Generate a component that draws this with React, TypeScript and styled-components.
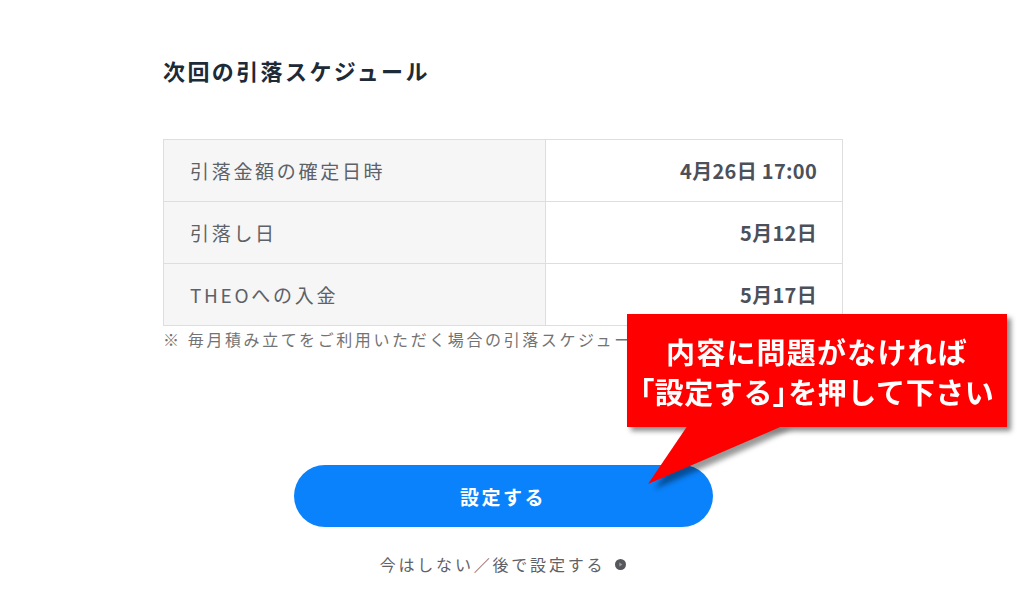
import React from "react";
import styled, { createGlobalStyle } from "styled-components";

const GlobalStyle = createGlobalStyle`
  html, body {
    margin: 0;
    padding: 0;
    background: #ffffff;
  }
  body {
    font-family: "Noto Sans CJK JP", "Noto Sans", sans-serif;
    width: 1024px;
    height: 594px;
    overflow: hidden;
  }
`;

const Page = styled.div`
  position: relative;
  width: 1024px;
  height: 594px;
  padding-top: 53px;
  box-sizing: border-box;
`;

const Column = styled.div`
  width: 680px;
  margin-left: 163px;
  display: flex;
  flex-direction: column;
`;

const Title = styled.h2`
  margin: 0;
  font-size: 22px;
  line-height: 34px;
  font-weight: 700;
  letter-spacing: 2.4px;
  color: #1d2a38;
`;

const Table = styled.table`
  margin-top: 52px;
  width: 680px;
  border-collapse: collapse;
  border: 1px solid #dedede;
`;

const Row = styled.tr`
  height: 62px;
`;

const LabelCell = styled.td`
  width: 382px;
  box-sizing: border-box;
  background: #f6f6f6;
  border: 1px solid #dedede;
  padding: 0 0 0 26px;
  font-size: 19px;
  letter-spacing: 2.7px;
  color: #5d6168;
  font-weight: 400;
`;

const ValueCell = styled.td`
  background: #ffffff;
  border: 1px solid #dedede;
  padding: 0 25px 0 0;
  text-align: right;
  font-size: 20px;
  font-weight: 700;
  color: #4b505a;
  letter-spacing: 0.3px;
`;

const Note = styled.p`
  margin: 1px 0 0;
  font-size: 16px;
  line-height: 24px;
  letter-spacing: 2.6px;
  color: #737373;
  white-space: nowrap;
`;

const PrimaryButton = styled.button`
  margin: 114px auto 0;
  width: 419px;
  height: 62px;
  border: none;
  border-radius: 31px;
  background: #0a82fb;
  color: #ffffff;
  font-family: "Noto Sans CJK JP", "Noto Sans", sans-serif;
  font-size: 19px;
  font-weight: 700;
  letter-spacing: 2.5px;
  cursor: pointer;
`;

const LaterLink = styled.a`
  margin: 25px auto 0;
  display: flex;
  align-items: center;
  gap: 10px;
  font-size: 16px;
  line-height: 24px;
  letter-spacing: 2.8px;
  color: #5f6166;
  text-decoration: none;
`;

const Callout = styled.div`
  position: absolute;
  left: 627px;
  top: 314px;
  width: 380px;
  height: 113px;
`;

const CalloutBox = styled.div`
  position: relative;
  width: 100%;
  height: 100%;
  background: #ff0000;
  box-shadow: 4px 4px 5px rgba(0, 0, 0, 0.45);
  display: flex;
  flex-direction: column;
  align-items: center;
  justify-content: center;
  color: #ffffff;
  font-size: 29px;
  font-weight: 700;
  line-height: 40px;
  z-index: 1;
`;

const CalloutLine = styled.div<{ $spacing: number }>`
  white-space: nowrap;
  letter-spacing: ${(p) => p.$spacing}px;
`;

const Bracket = styled.span`
  font-feature-settings: "palt";
`;

const Tail = styled.svg`
  position: absolute;
  left: 0;
  top: 0;
  overflow: visible;
  z-index: 2;
`;

const TailShadow = styled.svg`
  position: absolute;
  left: 0;
  top: 0;
  overflow: visible;
  z-index: 0;
  filter: blur(2.5px);
`;

function PlayCircle() {
  return (
    <svg width="11" height="11" viewBox="0 0 11 11">
      <circle cx="5.5" cy="5.5" r="5.5" fill="#55575c" />
      <path d="M4.3 3.4 L7.4 5.5 L4.3 7.6 Z" fill="#9a9ca0" />
    </svg>
  );
}

const rows = [
  { label: "引落金額の確定日時", value: "4月26日 17:00" },
  { label: "引落し日", value: "5月12日" },
  { label: "THEOへの入金", value: "5月17日" },
];

export default function App() {
  return (
    <>
      <GlobalStyle />
      <Page>
        <Column>
          <Title>次回の引落スケジュール</Title>
          <Table>
            <tbody>
              {rows.map((r) => (
                <Row key={r.label}>
                  <LabelCell>{r.label}</LabelCell>
                  <ValueCell>{r.value}</ValueCell>
                </Row>
              ))}
            </tbody>
          </Table>
          <Note>※ 毎月積み立てをご利用いただく場合の引落スケジュールです</Note>
          <PrimaryButton>設定する</PrimaryButton>
          <LaterLink href="#">
            今はしない／後で設定する
            <PlayCircle />
          </LaterLink>
        </Column>
        <Callout>
          <TailShadow width="380" height="113">
            <polygon points="65,112 162,112 25,172" fill="rgba(0,0,0,0.4)" transform="translate(3,3)" />
          </TailShadow>
          <CalloutBox>
            <CalloutLine $spacing={1.2}>内容に問題がなければ</CalloutLine>
            <CalloutLine $spacing={0.6}>
              <Bracket>「</Bracket>設定する<Bracket>」</Bracket>を押して下さい
            </CalloutLine>
          </CalloutBox>
          <Tail width="380" height="113">
            <polygon points="61,111 158,111 21,170" fill="#ff0000" />
          </Tail>
        </Callout>
      </Page>
    </>
  );
}
